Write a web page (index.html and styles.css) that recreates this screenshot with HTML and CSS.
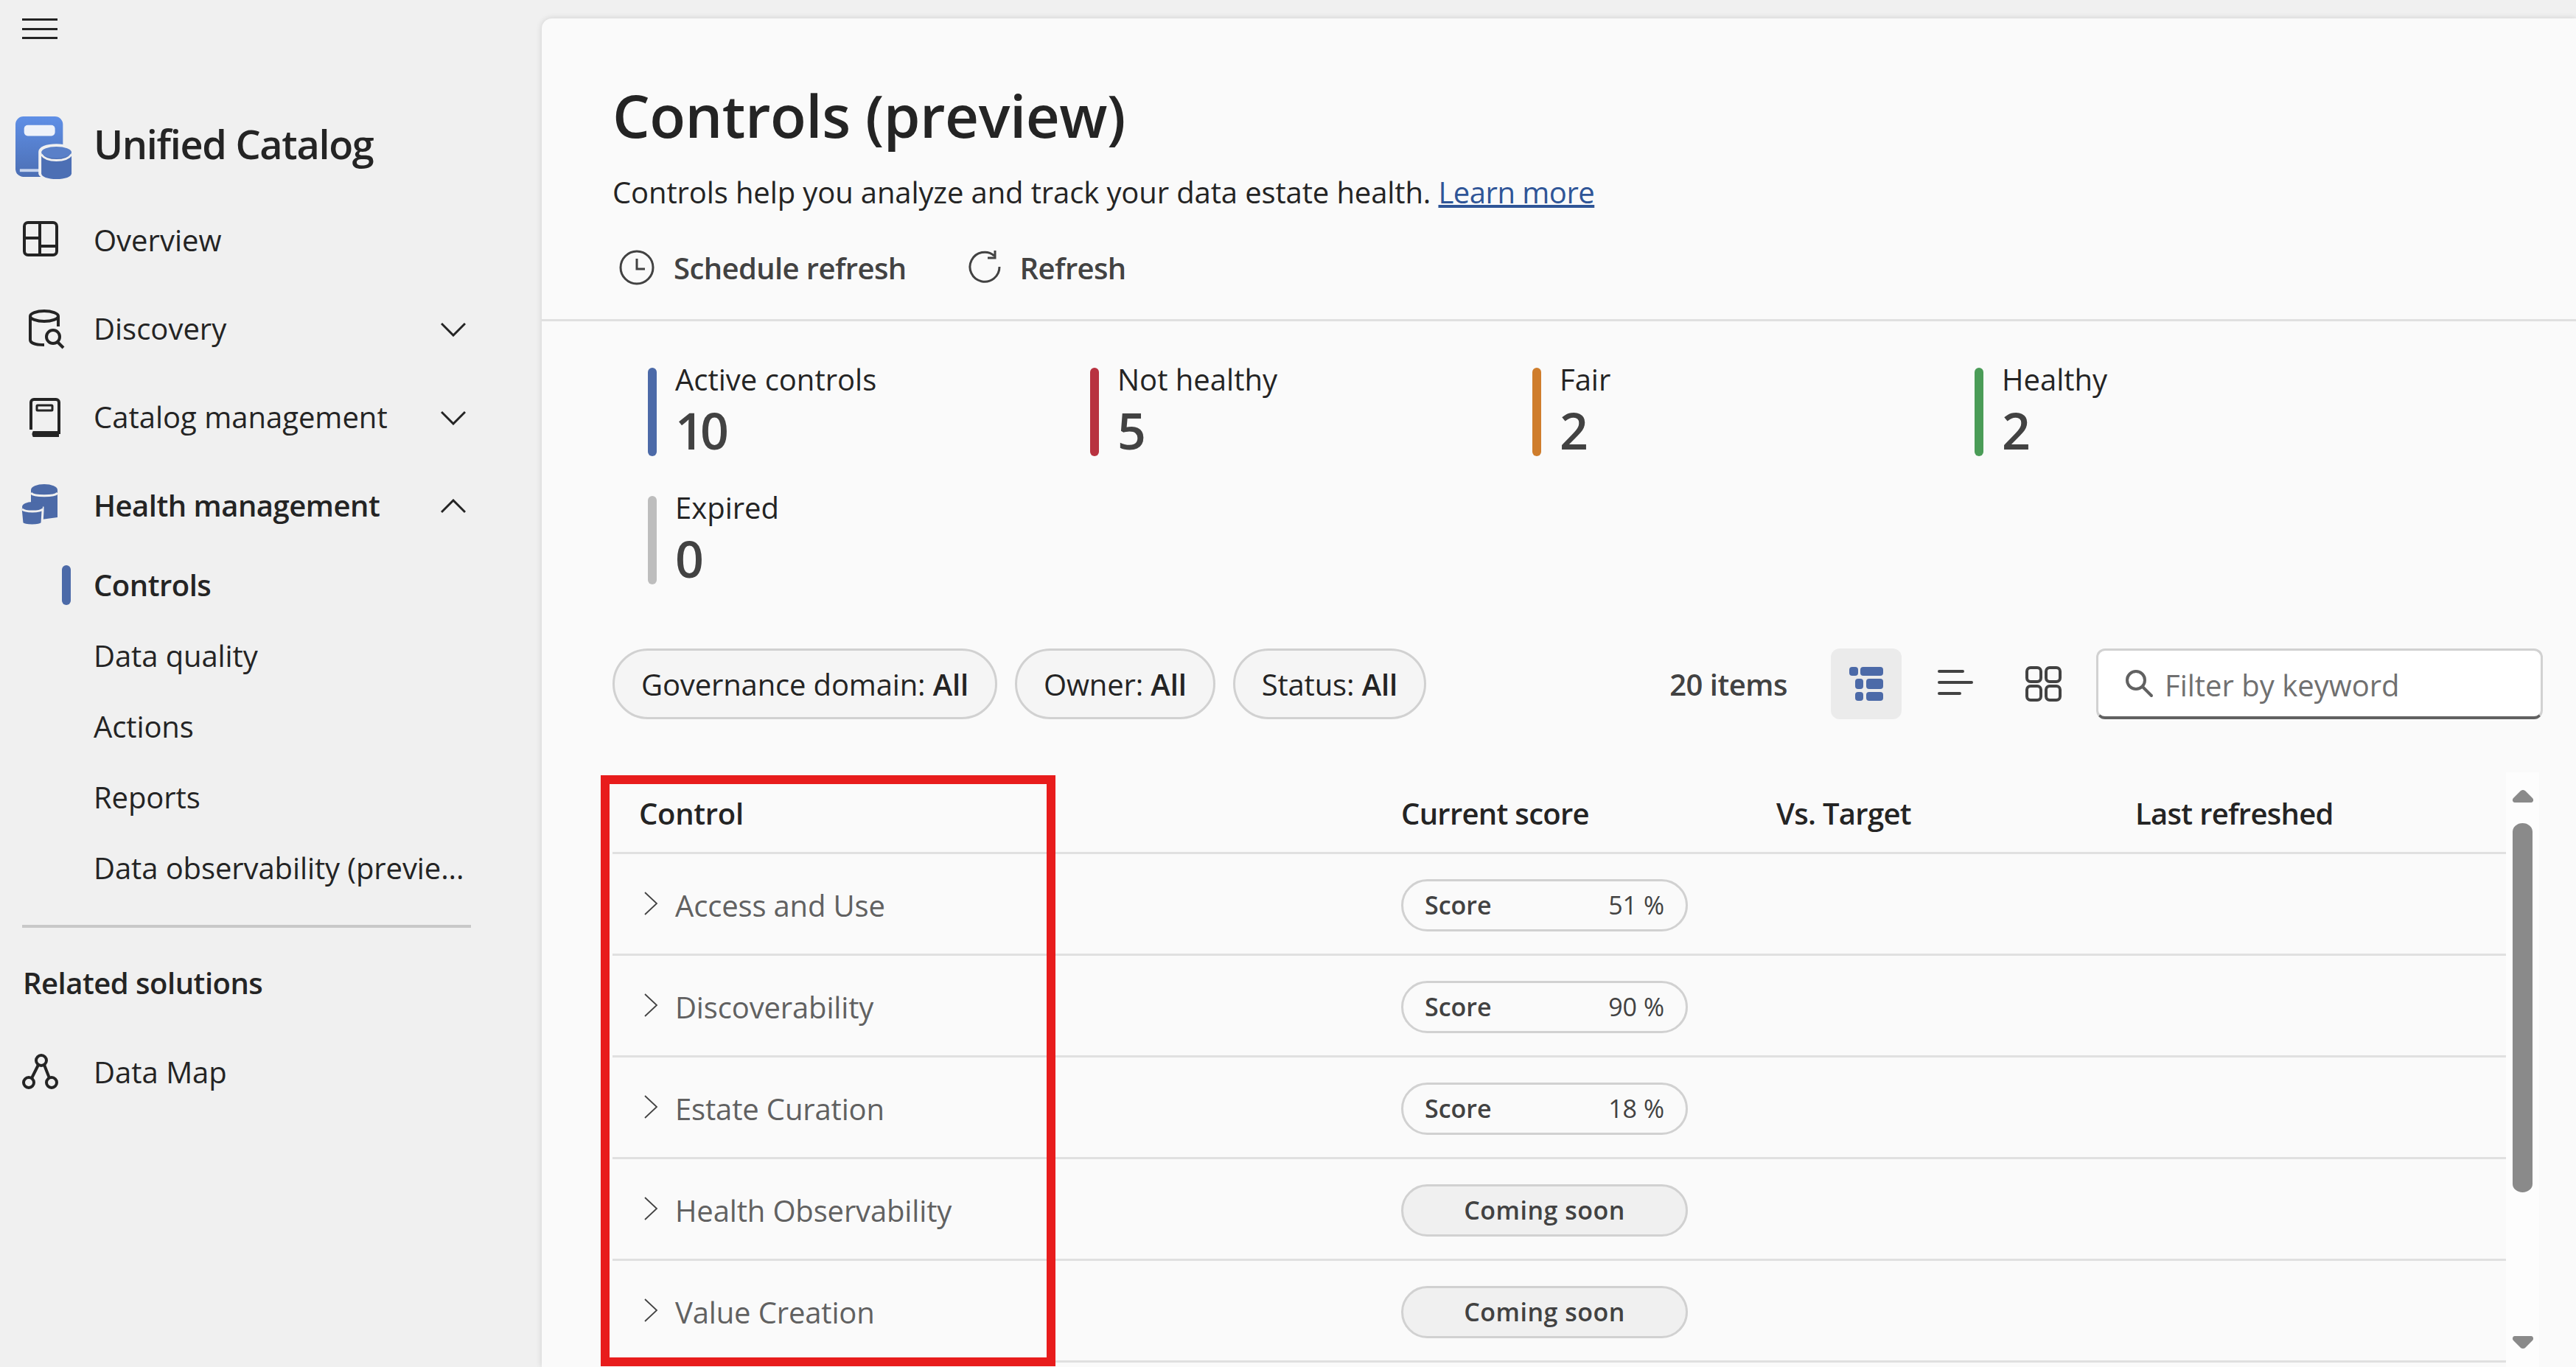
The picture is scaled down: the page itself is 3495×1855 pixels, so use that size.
FILE: index.html
```html
<!DOCTYPE html>
<html lang="en">
<head>
    <meta charset="UTF-8">
    <meta name="viewport" content="width=device-width, initial-scale=1.0">
    <title>Controls (preview)</title>
    <link rel="stylesheet" href="styles.css">
</head>
<body>
    <aside class="sidebar">
        <div class="menu-btn"><span></span><span></span><span></span></div>

        <div class="brand">
            <svg class="brand-logo" viewBox="0 0 80 88">
                <defs>
                    <linearGradient id="logoBook" x1="0" y1="0" x2="0" y2="1">
                        <stop offset="0" stop-color="#5f8fe6"/>
                        <stop offset="1" stop-color="#4c6fb4"/>
                    </linearGradient>
                </defs>
                <rect x="0" y="0" width="66" height="84" rx="11" fill="url(#logoBook)"/>
                <rect x="6" y="73" width="30" height="4" fill="#c6d4ee"/>
                <rect x="12" y="12" width="43" height="15" rx="5" fill="#eef2fa"/>
                <path d="M32 49c0-7 11-11 25-11s23 4 23 11v30c0 6-10 9-23 9s-25-3-25-9z" fill="#f0f0f0"/>
                <path d="M36 53v26c0 5 9 8 21 8s21-3 21-8V53z" fill="#4c6fb4"/>
                <ellipse cx="57" cy="50" rx="21" ry="8" fill="#5a80c8"/>
                <path d="M36 53c4 6 12 8 21 8s17-2 21-8" fill="none" stroke="#f0f0f0" stroke-width="3"/>
            </svg>
            <span class="brand-name">Unified Catalog</span>
        </div>

        <nav class="nav">
            <div class="nav-row">
                <svg class="nav-icon" viewBox="0 0 80 80" fill="none" stroke="#242424" stroke-width="4">
                    <rect x="13" y="15" width="44" height="44" rx="5"/>
                    <path d="M34 15v44M13 36h21M34 47h23"/>
                </svg>
                <span class="nav-label">Overview</span>
            </div>
            <div class="nav-row">
                <svg class="nav-icon" viewBox="0 0 80 80" fill="none" stroke="#242424" stroke-width="4">
                    <ellipse cx="40" cy="22" rx="19" ry="7"/>
                    <path d="M21 22v32c0 5 9 7 19 7M59 22v14"/>
                    <circle cx="52" cy="50" r="9"/>
                    <path d="M58 57l8 8"/>
                </svg>
                <span class="nav-label">Discovery</span>
                <svg class="chevron" viewBox="0 0 34 20" fill="none" stroke="#242424" stroke-width="3"><path d="M1 2l16 16L33 2"/></svg>
            </div>
            <div class="nav-row">
                <svg class="nav-icon" viewBox="0 0 80 80" fill="none" stroke="#242424" stroke-width="4">
                    <path d="M22 56V19a4 4 0 0 1 4-4h30a4 4 0 0 1 4 4v41H26a4 4 0 0 0 0 4h34"/>
                    <rect x="30" y="23" width="21" height="7" rx="1" stroke-width="3"/>
                </svg>
                <span class="nav-label">Catalog management</span>
                <svg class="chevron" viewBox="0 0 34 20" fill="none" stroke="#242424" stroke-width="3"><path d="M1 2l16 16L33 2"/></svg>
            </div>
            <div class="nav-row nav-row-open">
                <svg class="nav-icon" viewBox="0 0 80 80">
                    <path d="M22 18v36l14 4 22-3V18z" fill="#4c6aa8"/>
                    <ellipse cx="40" cy="18" rx="18" ry="8" fill="#4c6aa8"/>
                    <path d="M22 22c4 5 32 5 36 0" fill="none" stroke="#f0f0f0" stroke-width="3"/>
                    <path d="M8 42h30v4l-1 17c-3 4-24 4-27 0z" fill="#4c6aa8" stroke="#f0f0f0" stroke-width="3"/>
                    <ellipse cx="24" cy="41" rx="14" ry="7" fill="#4c6aa8"/>
                    <path d="M10 44c4 4 24 4 28 0" fill="none" stroke="#f0f0f0" stroke-width="3"/>
                </svg>
                <span class="nav-label">Health management</span>
                <svg class="chevron" viewBox="0 0 34 20" fill="none" stroke="#242424" stroke-width="3"><path d="M1 18L17 2l16 16"/></svg>
            </div>

            <div class="sub-row sub-row-active"><span class="sub-marker"></span>Controls</div>
            <div class="sub-row">Data quality</div>
            <div class="sub-row">Actions</div>
            <div class="sub-row">Reports</div>
            <div class="sub-row">Data observability (previe...</div>
        </nav>

        <hr class="side-divider">
        <div class="side-title">Related solutions</div>

        <div class="nav-row">
            <svg class="nav-icon" viewBox="0 0 80 80" fill="none" stroke="#242424" stroke-width="4">
                <circle cx="36" cy="23" r="7"/>
                <circle cx="19" cy="53" r="7"/>
                <circle cx="50" cy="53" r="7"/>
                <path d="M32 29l-9 18M40 29l7 18"/>
            </svg>
            <span class="nav-label">Data Map</span>
        </div>
    </aside>

    <main class="main">
        <header class="page-head">
            <h1 class="page-title">Controls (preview)</h1>
            <p class="page-desc">Controls help you analyze and track your data estate health. <a class="link" href="#">Learn more</a></p>
            <div class="commands">
                <div class="command">
                    <svg class="command-icon" viewBox="0 0 48 48" fill="none" stroke="#424242" stroke-width="3">
                        <circle cx="24" cy="24" r="22"/>
                        <path d="M24 12v14h11"/>
                    </svg>
                    Schedule refresh
                </div>
                <div class="command command-refresh">
                    <svg class="command-icon" viewBox="0 0 48 48" fill="none" stroke="#424242" stroke-width="3">
                        <path d="M37 8a20 20 0 1 0 7 15"/>
                        <path d="M38 1v10H28"/>
                    </svg>
                    Refresh
                </div>
            </div>
        </header>

        <section class="kpis">
            <div class="kpi"><span class="kpi-bar kpi-blue"></span><div><div class="kpi-label">Active controls</div><div class="kpi-value">10</div></div></div>
            <div class="kpi"><span class="kpi-bar kpi-red"></span><div><div class="kpi-label">Not healthy</div><div class="kpi-value">5</div></div></div>
            <div class="kpi"><span class="kpi-bar kpi-orange"></span><div><div class="kpi-label">Fair</div><div class="kpi-value">2</div></div></div>
            <div class="kpi"><span class="kpi-bar kpi-green"></span><div><div class="kpi-label">Healthy</div><div class="kpi-value">2</div></div></div>
            <div class="kpi"><span class="kpi-bar kpi-grey"></span><div><div class="kpi-label">Expired</div><div class="kpi-value">0</div></div></div>
        </section>

        <section class="filters">
            <div class="pill">Governance domain: <b>All</b></div>
            <div class="pill">Owner: <b>All</b></div>
            <div class="pill">Status: <b>All</b></div>
            <span class="item-count">20 items</span>
            <div class="view-btn view-btn-active">
                <svg viewBox="0 0 96 96" fill="#4c6aa8">
                    <rect x="25" y="25" width="12" height="12" rx="4"/>
                    <rect x="40" y="25" width="31" height="12" rx="4"/>
                    <rect x="33" y="41" width="11" height="14" rx="4"/>
                    <rect x="48" y="41" width="23" height="14" rx="4"/>
                    <rect x="33" y="59" width="11" height="12" rx="4"/>
                    <rect x="48" y="59" width="23" height="12" rx="4"/>
                </svg>
            </div>
            <div class="view-btn">
                <svg viewBox="0 0 96 96" fill="none" stroke="#424242" stroke-width="4" stroke-linecap="round">
                    <path d="M27 31h32M27 46h44M27 61h28"/>
                </svg>
            </div>
            <div class="view-btn">
                <svg viewBox="0 0 96 96" fill="none" stroke="#424242" stroke-width="4">
                    <rect x="26" y="26" width="19" height="19" rx="5"/>
                    <rect x="52" y="26" width="19" height="19" rx="5"/>
                    <rect x="26" y="51" width="19" height="19" rx="5"/>
                    <rect x="52" y="51" width="19" height="19" rx="5"/>
                </svg>
            </div>
            <label class="search">
                <svg class="search-icon" viewBox="0 0 40 40" fill="none" stroke="#616161" stroke-width="4">
                    <circle cx="16" cy="15" r="12"/>
                    <path d="M25 24l12 12" stroke-linecap="round"/>
                </svg>
                <input class="search-input" type="text" placeholder="Filter by keyword">
            </label>
        </section>

        <section class="table-area">
            <div class="table">
                <div class="row row-head">
                    <div class="cell-name">Control</div>
                    <div>Current score</div>
                    <div>Vs. Target</div>
                    <div>Last refreshed</div>
                </div>
                <div class="row">
                    <div class="cell-name"><svg class="row-chevron" viewBox="0 0 22 34" fill="none" stroke="#424242" stroke-width="1.8"><path d="M2 2l16 15L2 32"/></svg>Access and Use</div>
                    <div class="score"><b>Score</b><span>51 %</span></div>
                </div>
                <div class="row">
                    <div class="cell-name"><svg class="row-chevron" viewBox="0 0 22 34" fill="none" stroke="#424242" stroke-width="1.8"><path d="M2 2l16 15L2 32"/></svg>Discoverability</div>
                    <div class="score"><b>Score</b><span>90 %</span></div>
                </div>
                <div class="row">
                    <div class="cell-name"><svg class="row-chevron" viewBox="0 0 22 34" fill="none" stroke="#424242" stroke-width="1.8"><path d="M2 2l16 15L2 32"/></svg>Estate Curation</div>
                    <div class="score"><b>Score</b><span>18 %</span></div>
                </div>
                <div class="row">
                    <div class="cell-name"><svg class="row-chevron" viewBox="0 0 22 34" fill="none" stroke="#424242" stroke-width="1.8"><path d="M2 2l16 15L2 32"/></svg>Health Observability</div>
                    <div class="score score-soon">Coming soon</div>
                </div>
                <div class="row">
                    <div class="cell-name"><svg class="row-chevron" viewBox="0 0 22 34" fill="none" stroke="#424242" stroke-width="1.8"><path d="M2 2l16 15L2 32"/></svg>Value Creation</div>
                    <div class="score score-soon">Coming soon</div>
                </div>
            </div>

            <div class="scrollbar">
                <svg class="scroll-arrow" viewBox="0 0 28 22" fill="#8a8a8a"><path d="M14 0c2 0 3 1 4 2l9 9c2 2 1 6-2 6H3c-3 0-4-4-2-6l9-9c1-1 2-2 4-2z"/></svg>
                <div class="scroll-thumb"></div>
                <svg class="scroll-arrow scroll-arrow-down" viewBox="0 0 28 22" fill="#8a8a8a"><path d="M14 22c2 0 3-1 4-2l9-9c2-2 1-6-2-6H3c-3 0-4 4-2 6l9 9c1 1 2 2 4 2z"/></svg>
            </div>

            <div class="highlight"></div>
        </section>
    </main>
</body>
</html>
```

FILE: styles.css
```css
* {
    margin: 0;
    padding: 0;
    box-sizing: border-box;
}
html, body {
    height: 100%;
    overflow: hidden;
}
body {
    background-color: #f0f0f0;
    color: #242424;
    font-family: "Open Sans", "Noto Sans", sans-serif;
    font-size: 40px;
    display: flex;
}

/* sidebar */
.sidebar {
    width: 735px;
    flex: none;
    padding-top: 25px;
}
.menu-btn {
    width: 48px;
    height: 28px;
    margin-left: 30px;
    margin-bottom: 105px;
    display: flex;
    flex-direction: column;
    justify-content: space-between;
}
.menu-btn span {
    height: 3px;
    background-color: #242424;
}
.brand {
    display: flex;
    align-items: center;
    height: 86px;
    margin-left: 21px;
    margin-bottom: 23px;
}
.brand-logo {
    width: 78px;
    height: 86px;
    margin-right: 28px;
}
.brand-name {
    font-size: 54px;
    font-weight: 600;
    letter-spacing: -1.3px;
    margin-top: -12px;
}
.nav-row {
    height: 120px;
    display: flex;
    align-items: center;
    padding-left: 20px;
}
.nav-icon {
    width: 80px;
    height: 80px;
    margin-right: 27px;
    flex: none;
}
.nav-label {
    flex: 1;
    margin-top: -4px;
}
.nav-row-open .nav-label {
    font-weight: 600;
    letter-spacing: -0.5px;
}
.chevron {
    width: 34px;
    height: 20px;
    margin-right: 103px;
}
.sub-row {
    height: 96px;
    padding: 0 0 4px 127px;
    display: flex;
    align-items: center;
    position: relative;
    letter-spacing: -0.1px;
}
.sub-row-active {
    font-weight: 600;
    letter-spacing: -0.5px;
}
.sub-marker {
    position: absolute;
    left: 84px;
    top: 20px;
    width: 12px;
    height: 54px;
    border-radius: 6px;
    background-color: #4c6aa8;
}
.side-divider {
    border: none;
    height: 4px;
    width: 609px;
    margin: 28px 0 0 30px;
    background-color: #c8c8c8;
}
.side-title {
    height: 60px;
    line-height: 60px;
    margin: 45px 0 32px 31px;
    font-weight: 600;
    letter-spacing: -0.5px;
}

/* main card */
.main {
    flex: 1;
    min-width: 0;
    margin-top: 25px;
    background-color: #fafafa;
    border-top-left-radius: 14px;
    box-shadow: 0 0 8px rgba(0, 0, 0, 0.14);
    overflow: hidden;
}
.page-head {
    height: 411px;
    padding: 81px 0 0 96px;
    border-bottom: 3px solid #e0e0e0;
}
.page-title {
    font-size: 80px;
    line-height: 100px;
    font-weight: 600;
    letter-spacing: -0.5px;
}
.page-desc {
    line-height: 60px;
    margin-top: 25px;
    letter-spacing: -0.12px;
}
.link {
    color: #2f5597;
    letter-spacing: -0.5px;
}
.commands {
    display: flex;
    height: 60px;
    margin-top: 42px;
    padding-left: 9px;
    color: #424242;
    font-weight: 600;
    letter-spacing: -0.6px;
}
.command {
    display: flex;
    align-items: center;
}
.command-refresh {
    margin-left: 82px;
}
.command-icon {
    width: 48px;
    height: 48px;
    margin-right: 26px;
}
.command-refresh .command-icon {
    margin-right: 24px;
}
.kpis {
    display: grid;
    grid-template-columns: repeat(4, 600px);
    row-gap: 54px;
    padding: 63px 0 0 144px;
}
.kpi {
    display: flex;
    height: 120px;
}
.kpi-bar {
    width: 12px;
    border-radius: 6px;
    margin-right: 25px;
}
.kpi-blue { background-color: #4c6aa8; }
.kpi-red { background-color: #b83240; }
.kpi-orange { background-color: #cf7d2c; }
.kpi-green { background-color: #4a9c57; }
.kpi-grey { background-color: #bdbdbd; }
.kpi-label {
    line-height: 32px;
    margin-bottom: 16px;
}
.kpi-value {
    font-size: 68px;
    line-height: 74px;
    font-weight: 600;
    letter-spacing: -5px;
    color: #424242;
}
.filters {
    display: flex;
    align-items: center;
    height: 96px;
    margin-top: 87px;
    padding: 0 45px 0 96px;
}
.pill {
    height: 96px;
    padding: 2px 36px 0;
    margin-right: 24px;
    border: 3px solid #d1d1d1;
    border-radius: 48px;
    background-color: #f5f5f5;
    line-height: 88px;
    white-space: pre;
    letter-spacing: -0.15px;
}
.pill b {
    font-weight: 600;
}
.item-count {
    margin-left: auto;
    margin-right: 59px;
    font-weight: 600;
    letter-spacing: -0.5px;
    color: #424242;
}
.view-btn {
    width: 96px;
    height: 96px;
    margin-right: 24px;
    border-radius: 12px;
}
.view-btn svg {
    display: block;
    width: 96px;
    height: 96px;
}
.view-btn-active {
    background-color: #ebebeb;
}
.search {
    width: 606px;
    height: 96px;
    display: flex;
    align-items: center;
    padding-left: 35px;
    background-color: #fff;
    border: 3px solid #d1d1d1;
    border-bottom: 4px solid #616161;
    border-radius: 12px;
}
.search-icon {
    width: 40px;
    height: 40px;
    margin-right: 15px;
    flex: none;
}
.search-input {
    flex: 1;
    min-width: 0;
    padding-top: 4px;
    border: none;
    outline: none;
    background: transparent;
    font: inherit;
    color: #242424;
}
.search-input::placeholder {
    color: #707070;
    opacity: 1;
}

/* table */
.table-area {
    position: relative;
    display: flex;
    margin-top: 74px;
    padding-left: 96px;
}
.table {
    width: 2569px;
    flex: none;
}
.row {
    display: grid;
    grid-template-columns: 1070px 509px 487px 1fr;
    align-items: center;
    height: 138px;
    padding-top: 3px;
    border-bottom: 3px solid #e0e0e0;
}
.row-head {
    height: 109px;
    padding-top: 0;
    font-weight: 600;
    letter-spacing: -0.7px;
}
.row-head .cell-name {
    padding-left: 36px;
    color: #242424;
    letter-spacing: -0.3px;
}
.cell-name {
    display: flex;
    align-items: center;
    padding-left: 42px;
    color: #616161;
    letter-spacing: -0.15px;
}
.row-chevron {
    width: 22px;
    height: 34px;
    margin: -5px 21px 0 0;
}
.score {
    width: 389px;
    height: 71px;
    padding: 0 29px;
    border: 3px solid #d1d1d1;
    border-radius: 36px;
    display: flex;
    justify-content: space-between;
    align-items: center;
    font-size: 34px;
    color: #424242;
}
.score b {
    font-weight: 600;
}
.score-soon {
    justify-content: center;
    background-color: #f0f0f0;
    font-weight: 600;
    letter-spacing: 0.5px;
}
.scrollbar {
    width: 45px;
    height: 807px;
    margin-top: -2px;
    background-color: #fdfdfd;
    padding-top: 24px;
}
.scroll-arrow {
    display: block;
    width: 28px;
    height: 22px;
    margin-left: 9px;
}
.scroll-thumb {
    width: 27px;
    height: 501px;
    margin: 23px 0 0 9px;
    border-radius: 14px / 12px;
    background-color: #8a8a8a;
}
.scroll-arrow-down {
    margin-top: 190px;
}

/* red annotation box over the Control column */
.highlight {
    position: absolute;
    left: 80px;
    top: 2px;
    width: 617px;
    height: 802px;
    border: 12px solid #e81c1c;
}
```
